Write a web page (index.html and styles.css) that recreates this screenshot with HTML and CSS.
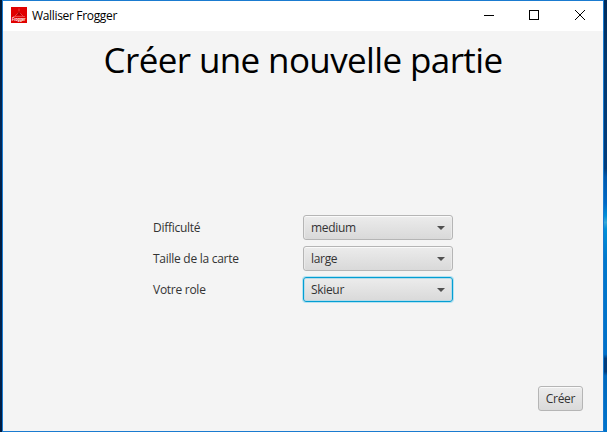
FILE: index.html
```html
<!DOCTYPE html>
<html lang="fr">
<head>
<meta charset="utf-8">
<title>Walliser Frogger</title>
<link rel="stylesheet" href="styles.css">
</head>
<body>
<div class="desktop">
  <div class="window">
    <header class="titlebar">
      <svg class="logo" width="16" height="16" viewBox="0 0 16 16">
        <rect width="16" height="16" fill="#e00000"/>
        <path d="M8 1.500v3M8 5l-4.500 4.500M8 5l4.500 4.500M2 9.500h12" fill="none" stroke="#f06060" stroke-width=".7"/>
        <path d="M8 4l2 4H6z" fill="#a80000"/>
        <text class="logo-text" x="1" y="14" textLength="13.500" lengthAdjust="spacingAndGlyphs">Frogger</text>
      </svg>
      <span class="caption">Walliser Frogger</span>
      <svg class="controls" width="138" height="30" viewBox="0 0 138 30" fill="none" stroke="#000" shape-rendering="crispEdges">
        <path d="M19 14.500h10"/>
        <path d="M64.500 9.500h9v9h-9z"/>
        <path d="M110 9l10 10M120 9l-10 10" shape-rendering="auto"/>
      </svg>
    </header>
    <main class="content">
      <h1 class="heading">Créer une nouvelle partie</h1>
      <div class="form">
        <span class="label">Difficulté</span>
        <div class="combo"><span>medium</span><i class="arrow"></i></div>
        <span class="label">Taille de la carte</span>
        <div class="combo"><span>large</span><i class="arrow"></i></div>
        <span class="label">Votre role</span>
        <div class="combo focused"><span>Skieur</span><i class="arrow"></i></div>
      </div>
      <footer class="actions"><button class="button">Créer</button></footer>
    </main>
  </div>
  <div class="wallpaper"></div>
</div>
</body>
</html>
```
FILE: styles.css
```css
* { box-sizing: border-box; }
body {
  margin: 0;
  overflow: hidden;
  font: 12px/16px "Open Sans", "Noto Sans", sans-serif;
  color: #333;
}
.desktop {
  display: flex;
  width: 607px;
  height: 432px;
  padding-left: 2px;
  background: linear-gradient(#001a38, #00285a 33%, #001a3c 50%, #002350 80%, #001b40);
}
.window {
  display: flex;
  flex-direction: column;
  width: 602px;
  height: 432px;
  border: 1px solid #1a7bd0;
  background: #f4f4f4;
}
.wallpaper {
  width: 3px;
  background: linear-gradient(#002c5c, #00386f 14%, #003c7c 39%, #0058ac 41%, #0068c4 47%, #0090d8 50%, #38a8d8 51.5%, #0090d8 53%, #0078cc 60%, #0070c8 82%, #003c7c 83%, #003c7c 86%, #0068bc 87%, #0074cc);
}
.titlebar {
  display: flex;
  flex: none;
  height: 30px;
  padding-left: 8px;
  background: #fff;
  color: #000;
}
.logo { margin-top: 6px; overflow: visible; }
.logo-text { font: italic bold 4.5px "Liberation Sans", sans-serif; fill: #fff; }
.caption { margin: 7px 0 0 5px; letter-spacing: -0.33px; }
.controls { margin-left: auto; }
.content { display: flex; flex: 1; flex-direction: column; }
.heading {
  margin: 0;
  height: 60px;
  color: #000;
  font-size: 35px;
  font-weight: 400;
  line-height: 58px;
  letter-spacing: -0.62px;
  text-align: center;
  white-space: nowrap;
}
.form {
  display: grid;
  grid-template-columns: 150px 150px;
  grid-auto-rows: 25px;
  gap: 6px 0;
  margin: 124px 0 0 150px;
  align-items: center;
}
.label, .combo span { letter-spacing: -0.27px; white-space: nowrap; justify-self: start; }
.combo {
  display: flex;
  align-items: center;
  justify-content: space-between;
  height: 25px;
  padding: 0 7px;
  border: 1px solid #b5b5b5;
  border-radius: 3px;
  background: linear-gradient(#ececec, #d9d9d9);
  box-shadow: inset 0 1px #fafafa, inset 1px 0 #eaeaea, inset -1px 0 #eaeaea;
}
.combo span { letter-spacing: -0.32px; }
.focused {
  border-color: #039ed3;
  box-shadow: 0 0 0 1px #b5e2f1, inset 0 0 0 1px #b5dbe8;
}
.arrow {
  width: 8px;
  height: 4px;
  margin-top: 1px;
  background: #505050;
  clip-path: polygon(0 0, 100% 0, 50% 100%);
}
.actions { display: flex; justify-content: flex-end; margin: auto 20px 20px 0; }
.button {
  width: 45px;
  height: 25px;
  padding: 0;
  border: 1px solid #b5b5b5;
  border-radius: 3px;
  background: linear-gradient(#ececec, #dadada);
  box-shadow: inset 0 1px #fafafa;
  color: #333;
  font: 12px/16px "Open Sans", sans-serif;
  letter-spacing: -0.3px;
}
```
